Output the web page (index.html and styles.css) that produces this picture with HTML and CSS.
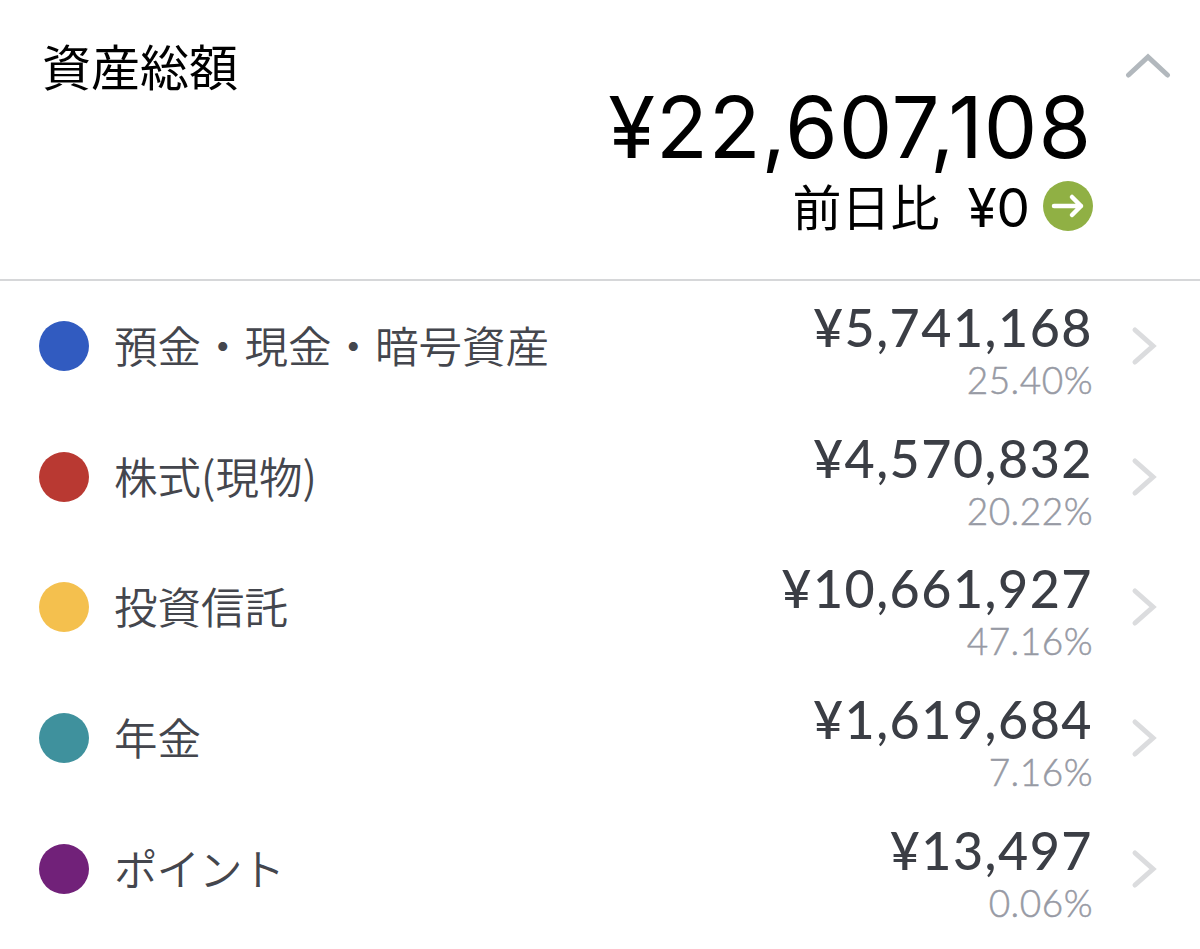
FILE: index.html
```html
<!DOCTYPE html>
<html lang="ja">
<head>
    <meta charset="UTF-8">
    <meta name="viewport" content="width=device-width, initial-scale=1.0">
    <title>資産総額</title>
    <link rel="stylesheet" href="styles.css">
</head>
<body>
    <header class="summary">
        <h1>資産総額</h1>
        <div class="total">
            <div class="total-amount">¥22,607,108</div>
            <div class="change">
                <span class="change-label">前日比</span>
                <span class="change-value">¥0</span>
                <svg class="change-icon" viewBox="0 0 50 50">
                    <circle cx="25" cy="25" r="25" fill="#90b044"/>
                    <path d="M11 25H38M29 16L38 25L29 34" fill="none" stroke="#fff" stroke-width="4.5" stroke-linecap="round" stroke-linejoin="round"/>
                </svg>
            </div>
        </div>
        <svg class="collapse" viewBox="0 0 46 28">
            <path d="M3.5 24L23 6L42.5 24" fill="none" stroke="#b2b8bd" stroke-width="5" stroke-linecap="round"/>
        </svg>
    </header>
    <ul class="assets">
        <li class="asset">
            <span class="dot deposit"></span>
            <span class="name">預金・現金・暗号資産</span>
            <div class="figures">
                <div class="amount">¥5,741,168</div>
                <div class="percent">25.40%</div>
            </div>
            <svg class="chevron" viewBox="0 0 26 40"><path d="M4 4L22 20L4 36"/></svg>
        </li>
        <li class="asset">
            <span class="dot stock"></span>
            <span class="name">株式(現物)</span>
            <div class="figures">
                <div class="amount">¥4,570,832</div>
                <div class="percent">20.22%</div>
            </div>
            <svg class="chevron" viewBox="0 0 26 40"><path d="M4 4L22 20L4 36"/></svg>
        </li>
        <li class="asset">
            <span class="dot fund"></span>
            <span class="name">投資信託</span>
            <div class="figures">
                <div class="amount">¥10,661,927</div>
                <div class="percent">47.16%</div>
            </div>
            <svg class="chevron" viewBox="0 0 26 40"><path d="M4 4L22 20L4 36"/></svg>
        </li>
        <li class="asset">
            <span class="dot pension"></span>
            <span class="name">年金</span>
            <div class="figures">
                <div class="amount">¥1,619,684</div>
                <div class="percent">7.16%</div>
            </div>
            <svg class="chevron" viewBox="0 0 26 40"><path d="M4 4L22 20L4 36"/></svg>
        </li>
        <li class="asset">
            <span class="dot point"></span>
            <span class="name kana">ポイント</span>
            <div class="figures">
                <div class="amount">¥13,497</div>
                <div class="percent">0.06%</div>
            </div>
            <svg class="chevron" viewBox="0 0 26 40"><path d="M4 4L22 20L4 36"/></svg>
        </li>
    </ul>
</body>
</html>
```
FILE: styles.css
```css
* {
    box-sizing: border-box;
}

body {
    margin: 0;
    background-color: #fff;
    color: #000;
    font-family: Inter, "Noto Sans CJK JP", sans-serif;
    overflow: hidden;
}

.summary {
    display: flex;
    height: 281px;
    padding-left: 42px;
    padding-right: 29px;
    border-bottom: 2px solid #d6d7d9;
}

h1 {
    margin: 40px 0 0;
    font-family: "Noto Sans CJK JP", sans-serif;
    font-size: 49px;
    font-weight: 400;
    line-height: 50px;
}

.total {
    flex: 1;
    padding-top: 79px;
}

.total-amount {
    height: 97px;
    margin-right: 1px;
    font-size: 85px;
    line-height: 97px;
    letter-spacing: 1px;
    text-align: right;
}

.change {
    display: flex;
    justify-content: flex-end;
    align-items: center;
    height: 60px;
    font-size: 49px;
    line-height: 60px;
}

.change-label {
    margin-right: 28px;
    padding-top: 5px;
}

.change-value {
    padding-top: 4px;
    font-size: 53px;
    font-weight: 380;
}

.change-icon {
    width: 50px;
    height: 50px;
    margin-left: 13px;
}

.collapse {
    width: 46px;
    height: 28px;
    margin-top: 51px;
    margin-left: 32px;
}

.assets {
    margin: 0;
    padding: 0;
    list-style: none;
}

.asset {
    display: flex;
    align-items: center;
    height: 130.6px;
    padding: 0 43px 0 39px;
}

.dot {
    width: 50px;
    height: 50px;
    border-radius: 50%;
}

.deposit {
    background-color: #315bc0;
}

.stock {
    background-color: #b93932;
}

.fund {
    background-color: #f4c04e;
}

.pension {
    background-color: #3f919d;
}

.point {
    background-color: #712179;
}

.name {
    flex: 1;
    margin-left: 25px;
    padding-bottom: 3px;
    color: #44464d;
    font-family: "Noto Sans CJK JP", sans-serif;
    font-size: 43.5px;
    font-weight: 350;
}

.kana {
    letter-spacing: -1px;
}

.figures {
    padding-top: 10px;
    font-family: Lato, sans-serif;
    text-align: right;
}

.amount {
    color: #3b3e45;
    font-size: 52px;
    font-weight: 500;
    line-height: 58px;
    letter-spacing: 1.5px;
}

.percent {
    color: #979aa4;
    font-size: 37px;
    font-weight: 300;
    line-height: 48px;
    letter-spacing: 0.5px;
    -webkit-text-stroke: 0.5px #979aa4;
}

.chevron {
    width: 26px;
    height: 40px;
    margin-left: 38px;
    fill: none;
    stroke: #dbdcde;
    stroke-width: 5;
    stroke-linecap: round;
}
```
